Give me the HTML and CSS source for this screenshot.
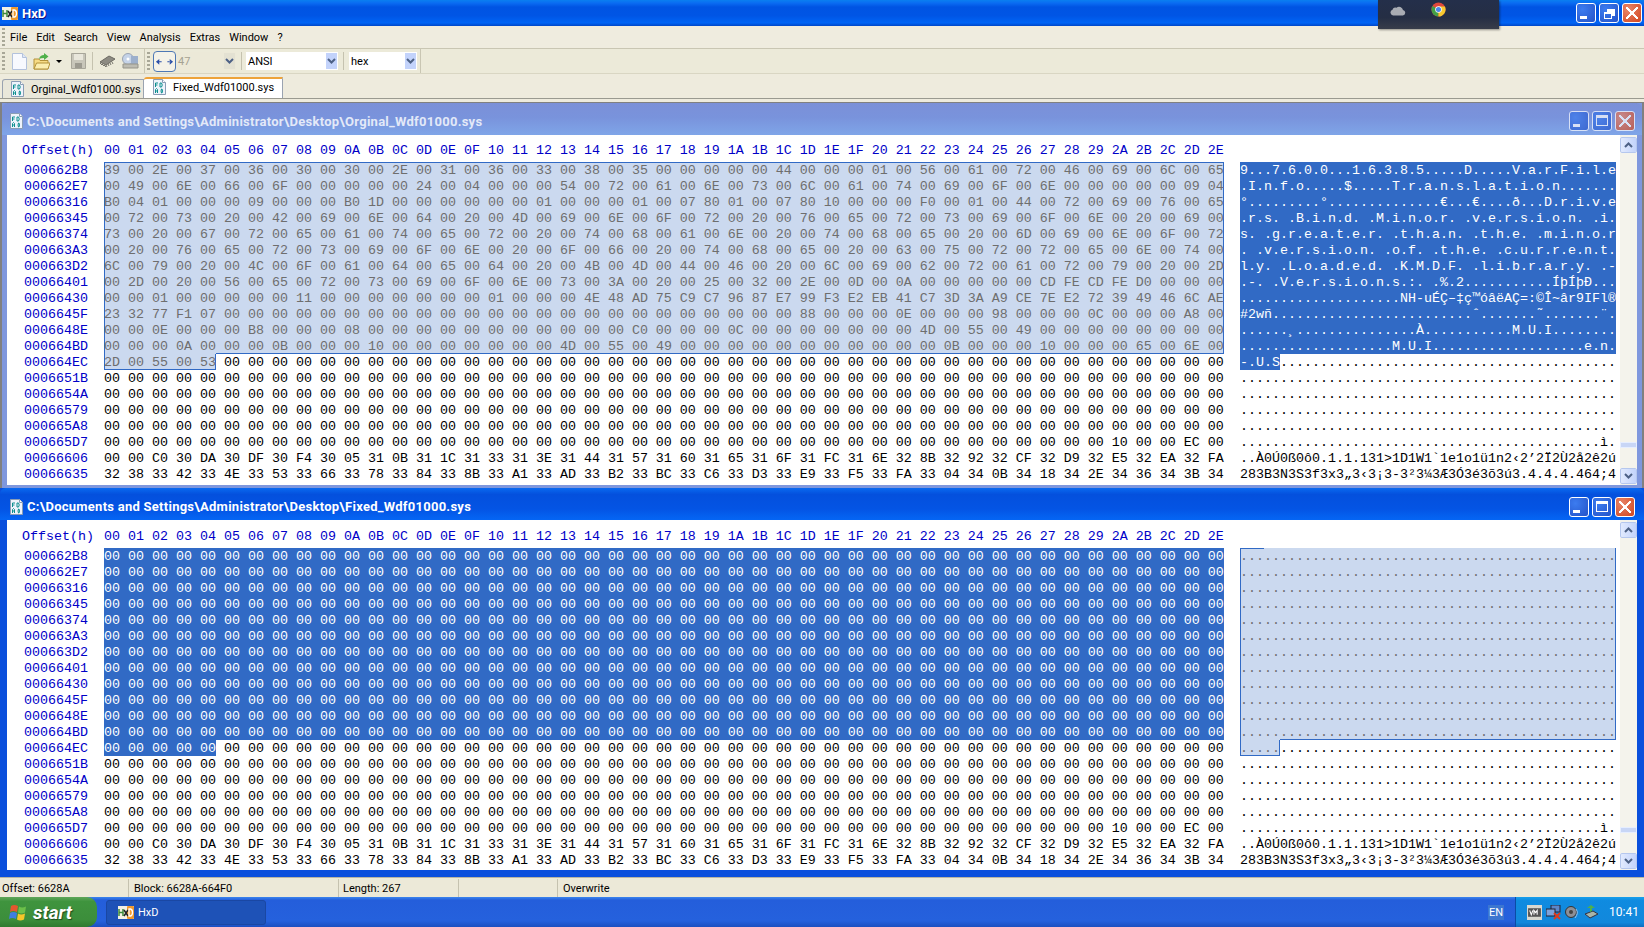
FILE: index.html
```html
<!DOCTYPE html>
<html>
<head>
    <meta charset="utf-8">
    <title>HxD</title>
    <link rel="stylesheet" href="styles.css">
</head>
<body>
    <svg class="defs" width="0" height="0">
        <symbol id="hxd" viewBox="0 0 16 13">
            <rect width="16" height="13" fill="#f4f1e4"/>
            <rect x="9" y="0" width="7" height="13" rx="1" fill="#f09a2e"/>
            <path d="M1 3v7M5 3v7M1 6.5h4" stroke="#3c8a3a" stroke-width="1.5" fill="none"/>
            <path d="M6 4l4 6M10 4l-4 6" stroke="#222" stroke-width="1.5" fill="none"/>
            <path d="M11 3v7h1.5q2-.5 2-3.500t-2-3.500z" stroke="#fff" stroke-width="1.300" fill="none"/>
        </symbol>
        <symbol id="doc" viewBox="0 0 13 16">
            <path d="M.5.5h9l3 3v12H.5z" fill="#eef3fb" stroke="#8a9db5"/>
            <path d="M9.500.5v3h3" fill="#fff" stroke="#8a9db5"/>
            <path d="M2.500 4h2.500M2.500 4v4M2.500 6h2M7 4v4M7 4h1.500q1.500 2 0 4H7M2.500 14v-3.500l1-1 1 1V14M2.500 12h2M8.500 10h.5q1 2 0 4h-.5q-1-2 0-4z" fill="none" stroke="#0c8f8f"/>
        </symbol>
        <symbol id="up" viewBox="0 0 9 6">
            <path d="M1 5l3.500-3.500L8 5" fill="none" stroke="#4d6185" stroke-width="2"/>
        </symbol>
        <symbol id="down" viewBox="0 0 9 6">
            <path d="M1 1l3.500 3.500L8 1" fill="none" stroke="#4d6185" stroke-width="2"/>
        </symbol>
    </svg>

    <div class="titlebar">
        <svg class="app-icon"><use href="#hxd"/></svg>
        <span class="app-name">HxD</span>
        <div class="caps caps-main">
            <span class="cap"><i class="g-min"></i></span>
            <span class="cap"><i class="g-restore"></i></span>
            <span class="cap cap-close"><i class="g-x"></i></span>
        </div>
    </div>

    <div class="thumb">
        <svg class="thumb-cloud" viewBox="0 0 16 12"><path d="M3 11.500a3 3 0 0 1-.500-5.800 3 3 0 0 1 4-2 4 4 0 0 1 6.500 2.300 2.800 2.800 0 0 1 0 5.500z" fill="#a9acb3"/></svg>
        <svg class="thumb-chrome" viewBox="0 0 16 16">
            <circle cx="8" cy="8" r="7.500" fill="#e0483c"/>
            <path d="M8 8L1.500 4.300A7.500 7.500 0 0 0 8 15.500z" fill="#43a047"/>
            <path d="M8 8v7.500A7.500 7.500 0 0 0 14.800 4.800H8z" fill="#f6c92f"/>
            <circle cx="8" cy="8" r="3.500" fill="#fff"/>
            <circle cx="8" cy="8" r="2.700" fill="#4a86e8"/>
        </svg>
    </div>

    <div class="menubar">
        <span class="grip"></span>
        <span class="menu-item">File</span>
        <span class="menu-item">Edit</span>
        <span class="menu-item">Search</span>
        <span class="menu-item">View</span>
        <span class="menu-item">Analysis</span>
        <span class="menu-item">Extras</span>
        <span class="menu-item">Window</span>
        <span class="menu-item">?</span>
    </div>

    <div class="toolbar">
        <div class="toolgroup">
            <span class="grip"></span>
            <svg class="tool tool-new" viewBox="0 0 15 17"><path d="M.5.5h10l4 4v12H.5z" fill="#f7f9fe" stroke="#b3c2dc"/><path d="M10.500.5v4h4" fill="#dfe7f5" stroke="#b3c2dc"/></svg>
            <svg class="tool tool-open" viewBox="0 0 17 17"><path d="M1 6h5l1 1.500h8V16H1z" fill="#f7dc86" stroke="#b3923a"/><path d="M1 16l2.500-6H17l-2 6z" fill="#fbeeb0" stroke="#b3923a"/><path d="M6 6q1-4 5-4V0l4.500 3.500L11 7V5q-3 0-5 1z" fill="#4fb04a"/></svg>
            <span class="tool-arrow"></span>
            <svg class="tool tool-save" viewBox="0 0 15 16"><path d="M.5.500h14v15H.5z" fill="#c8c6ba" stroke="#a8a69a"/><path d="M3 1h9v6H3z" fill="#e9e7dc"/><path d="M4 10h7v5H4z" fill="#9c9a90"/></svg>
            <span class="tool-sep"></span>
            <svg class="tool tool-chip" viewBox="0 0 17 13"><path d="M1 7l9-6 6 3-9 6z" fill="#8d8b82" stroke="#6c6a62"/><path d="M1 8l2 2M3 9l2 2M5 10l2 2M7 10l1 2M9 9l1 2M11 8l1 2M13 7l1 2" stroke="#77756c"/></svg>
            <svg class="tool tool-disk" viewBox="0 0 17 16"><ellipse cx="6" cy="6" rx="5.500" ry="5.500" fill="#c5d3e8" stroke="#9aa3b2"/><circle cx="6" cy="6" r="1.500" fill="#fff"/><path d="M9 3h7v8H9z" fill="#9db0cc"/><path d="M1 11h15v4H1z" fill="#bdbcb2" stroke="#95948a"/></svg>
        </div>
        <div class="toolgroup toolgroup-2">
            <span class="grip"></span>
            <span class="toggle"><svg viewBox="0 0 20 8"><path d="M1 4l3.500-3v6zM19 4l-3.500-3v6zM4 3.500h3v1H4zM13 3.500h3v1h-3z" fill="#2a4fa8"/></svg></span>
            <span class="combo combo-off"><span>47</span><i class="combo-btn"><svg><use href="#down"/></svg></i></span>
            <span class="tool-sep sep-wide"></span>
            <span class="combo combo-ansi"><span>ANSI</span><i class="combo-btn"><svg><use href="#down"/></svg></i></span>
            <span class="tool-sep sep-wide"></span>
            <span class="combo combo-hex"><span>hex</span><i class="combo-btn"><svg><use href="#down"/></svg></i></span>
        </div>
    </div>

    <div class="tabs">
        <span class="tab"><svg class="doc-icon"><use href="#doc"/></svg>Orginal_Wdf01000.sys</span>
        <span class="tab tab-active"><svg class="doc-icon"><use href="#doc"/></svg>Fixed_Wdf01000.sys</span>
    </div>

    <div class="mdi">
        <div class="win win-off">
            <div class="win-title">
                <svg class="doc-icon"><use href="#doc"/></svg>
                <span class="win-name">C:\Documents and Settings\Administrator\Desktop\Orginal_Wdf01000.sys</span>
                <div class="caps">
                    <span class="cap"><i class="g-min"></i></span>
                    <span class="cap"><i class="g-max"></i></span>
                    <span class="cap cap-close"><i class="g-x"></i></span>
                </div>
            </div>
            <div class="win-body">
                <div class="hexview">
                    <div class="row head"><span class="off">Offset(h)</span><span class="hex">00 01 02 03 04 05 06 07 08 09 0A 0B 0C 0D 0E 0F 10 11 12 13 14 15 16 17 18 19 1A 1B 1C 1D 1E 1F 20 21 22 23 24 25 26 27 28 29 2A 2B 2C 2D 2E</span></div>
                    <div class="rows">
                        <div class="row"><span class="off">000662B8</span><span class="hex"><span class="in ol-top">39 00 2E 00 37 00 36 00 30 00 30 00 2E 00 31 00 36 00 33 00 38 00 35 00 00 00 00 00 44 00 00 00 01 00 56 00 61 00 72 00 46 00 69 00 6C 00 65</span></span><span class="asc"><span class="act">9...7.6.0.0...1.6.3.8.5.....D.....V.a.r.F.i.l.e</span></span></div>
                        <div class="row"><span class="off">000662E7</span><span class="hex"><span class="in ol-mid">00 49 00 6E 00 66 00 6F 00 00 00 00 00 24 00 04 00 00 00 54 00 72 00 61 00 6E 00 73 00 6C 00 61 00 74 00 69 00 6F 00 6E 00 00 00 00 00 09 04</span></span><span class="asc"><span class="act">.I.n.f.o.....$.....T.r.a.n.s.l.a.t.i.o.n.......</span></span></div>
                        <div class="row"><span class="off">00066316</span><span class="hex"><span class="in ol-mid">B0 04 01 00 00 00 09 00 00 00 B0 1D 00 00 00 00 00 00 01 00 00 00 01 00 07 80 01 00 07 80 10 00 00 00 F0 00 01 00 44 00 72 00 69 00 76 00 65</span></span><span class="asc"><span class="act">°.........°..............€...€....ð...D.r.i.v.e</span></span></div>
                        <div class="row"><span class="off">00066345</span><span class="hex"><span class="in ol-mid">00 72 00 73 00 20 00 42 00 69 00 6E 00 64 00 20 00 4D 00 69 00 6E 00 6F 00 72 00 20 00 76 00 65 00 72 00 73 00 69 00 6F 00 6E 00 20 00 69 00</span></span><span class="asc"><span class="act">.r.s. .B.i.n.d. .M.i.n.o.r. .v.e.r.s.i.o.n. .i.</span></span></div>
                        <div class="row"><span class="off">00066374</span><span class="hex"><span class="in ol-mid">73 00 20 00 67 00 72 00 65 00 61 00 74 00 65 00 72 00 20 00 74 00 68 00 61 00 6E 00 20 00 74 00 68 00 65 00 20 00 6D 00 69 00 6E 00 6F 00 72</span></span><span class="asc"><span class="act">s. .g.r.e.a.t.e.r. .t.h.a.n. .t.h.e. .m.i.n.o.r</span></span></div>
                        <div class="row"><span class="off">000663A3</span><span class="hex"><span class="in ol-mid">00 20 00 76 00 65 00 72 00 73 00 69 00 6F 00 6E 00 20 00 6F 00 66 00 20 00 74 00 68 00 65 00 20 00 63 00 75 00 72 00 72 00 65 00 6E 00 74 00</span></span><span class="asc"><span class="act">. .v.e.r.s.i.o.n. .o.f. .t.h.e. .c.u.r.r.e.n.t.</span></span></div>
                        <div class="row"><span class="off">000663D2</span><span class="hex"><span class="in ol-mid">6C 00 79 00 20 00 4C 00 6F 00 61 00 64 00 65 00 64 00 20 00 4B 00 4D 00 44 00 46 00 20 00 6C 00 69 00 62 00 72 00 61 00 72 00 79 00 20 00 2D</span></span><span class="asc"><span class="act">l.y. .L.o.a.d.e.d. .K.M.D.F. .l.i.b.r.a.r.y. .-</span></span></div>
                        <div class="row"><span class="off">00066401</span><span class="hex"><span class="in ol-mid">00 2D 00 20 00 56 00 65 00 72 00 73 00 69 00 6F 00 6E 00 73 00 3A 00 20 00 25 00 32 00 2E 00 0D 00 0A 00 00 00 00 00 CD FE CD FE D0 00 00 00</span></span><span class="asc"><span class="act">.-. .V.e.r.s.i.o.n.s.:. .%.2...........ÍþÍþÐ...</span></span></div>
                        <div class="row"><span class="off">00066430</span><span class="hex"><span class="in ol-mid">00 00 01 00 00 00 00 00 11 00 00 00 00 00 00 00 01 00 00 00 4E 48 AD 75 C9 C7 96 87 E7 99 F3 E2 EB 41 C7 3D 3A A9 CE 7E E2 72 39 49 46 6C AE</span></span><span class="asc"><span class="act">....................NH-uÉÇ–‡ç™óâëAÇ=:©Î~âr9IFl®</span></span></div>
                        <div class="row"><span class="off">0006645F</span><span class="hex"><span class="in ol-mid">23 32 77 F1 07 00 00 00 00 00 00 00 00 00 00 00 00 00 00 00 00 00 00 00 00 00 00 00 00 88 00 00 00 0E 00 00 00 98 00 00 00 0C 00 00 00 A8 00</span></span><span class="asc"><span class="act">#2wñ.........................ˆ.......˜.......¨.</span></span></div>
                        <div class="row"><span class="off">0006648E</span><span class="hex"><span class="in ol-mid">00 00 0E 00 00 00 B8 00 00 00 08 00 00 00 00 00 00 00 00 00 00 00 C0 00 00 00 0C 00 00 00 00 00 00 00 4D 00 55 00 49 00 00 00 00 00 00 00 00</span></span><span class="asc"><span class="act">......¸...............À...........M.U.I........</span></span></div>
                        <div class="row"><span class="off">000664BD</span><span class="hex"><span class="in ol-left">00 00 00 0A 00</span><span class="in ol-rb"> 00 00 0B 00 00 00 10 00 00 00 00 00 00 00 4D 00 55 00 49 00 00 00 00 00 00 00 00 00 00 00 0B 00 00 00 10 00 00 00 65 00 6E 00</span></span><span class="asc"><span class="act">...................M.U.I...................e.n.</span></span></div>
                        <div class="row"><span class="off">000664EC</span><span class="hex"><span class="in ol-end">2D 00 55 00 53</span> 00 00 00 00 00 00 00 00 00 00 00 00 00 00 00 00 00 00 00 00 00 00 00 00 00 00 00 00 00 00 00 00 00 00 00 00 00 00 00 00 00 00</span><span class="asc"><span class="act">-.U.S</span>..........................................</span></div>
                        <div class="row"><span class="off">0006651B</span><span class="hex">00 00 00 00 00 00 00 00 00 00 00 00 00 00 00 00 00 00 00 00 00 00 00 00 00 00 00 00 00 00 00 00 00 00 00 00 00 00 00 00 00 00 00 00 00 00 00</span><span class="asc">...............................................</span></div>
                        <div class="row"><span class="off">0006654A</span><span class="hex">00 00 00 00 00 00 00 00 00 00 00 00 00 00 00 00 00 00 00 00 00 00 00 00 00 00 00 00 00 00 00 00 00 00 00 00 00 00 00 00 00 00 00 00 00 00 00</span><span class="asc">...............................................</span></div>
                        <div class="row"><span class="off">00066579</span><span class="hex">00 00 00 00 00 00 00 00 00 00 00 00 00 00 00 00 00 00 00 00 00 00 00 00 00 00 00 00 00 00 00 00 00 00 00 00 00 00 00 00 00 00 00 00 00 00 00</span><span class="asc">...............................................</span></div>
                        <div class="row"><span class="off">000665A8</span><span class="hex">00 00 00 00 00 00 00 00 00 00 00 00 00 00 00 00 00 00 00 00 00 00 00 00 00 00 00 00 00 00 00 00 00 00 00 00 00 00 00 00 00 00 00 00 00 00 00</span><span class="asc">...............................................</span></div>
                        <div class="row"><span class="off">000665D7</span><span class="hex">00 00 00 00 00 00 00 00 00 00 00 00 00 00 00 00 00 00 00 00 00 00 00 00 00 00 00 00 00 00 00 00 00 00 00 00 00 00 00 00 00 00 10 00 00 EC 00</span><span class="asc">.............................................ì.</span></div>
                        <div class="row"><span class="off">00066606</span><span class="hex">00 00 C0 30 DA 30 DF 30 F4 30 05 31 0B 31 1C 31 33 31 3E 31 44 31 57 31 60 31 65 31 6F 31 FC 31 6E 32 8B 32 92 32 CF 32 D9 32 E5 32 EA 32 FA</span><span class="asc">..À0Ú0ß0ô0.1.1.131&gt;1D1W1`1e1o1ü1n2‹2’2Ï2Ù2å2ê2ú</span></div>
                        <div class="row"><span class="off">00066635</span><span class="hex">32 38 33 42 33 4E 33 53 33 66 33 78 33 84 33 8B 33 A1 33 AD 33 B2 33 BC 33 C6 33 D3 33 E9 33 F5 33 FA 33 04 34 0B 34 18 34 2E 34 36 34 3B 34</span><span class="asc">283B3N3S3f3x3„3‹3¡3-3²3¼3Æ3Ó3é3õ3ú3.4.4.4.464;4</span></div>
                    </div>
                </div>
                <div class="scroll">
                    <span class="sb-btn"><svg><use href="#up"/></svg></span>
                    <span class="sb-track"><span class="sb-thumb"></span></span>
                    <span class="sb-btn"><svg><use href="#down"/></svg></span>
                </div>
            </div>
        </div>

        <div class="win win-on">
            <div class="win-title">
                <svg class="doc-icon"><use href="#doc"/></svg>
                <span class="win-name">C:\Documents and Settings\Administrator\Desktop\Fixed_Wdf01000.sys</span>
                <div class="caps">
                    <span class="cap"><i class="g-min"></i></span>
                    <span class="cap"><i class="g-max"></i></span>
                    <span class="cap cap-close"><i class="g-x"></i></span>
                </div>
            </div>
            <div class="win-body">
                <div class="hexview">
                    <div class="row head"><span class="off">Offset(h)</span><span class="hex">00 01 02 03 04 05 06 07 08 09 0A 0B 0C 0D 0E 0F 10 11 12 13 14 15 16 17 18 19 1A 1B 1C 1D 1E 1F 20 21 22 23 24 25 26 27 28 29 2A 2B 2C 2D 2E</span></div>
                    <div class="rows">
                        <div class="row"><span class="off">000662B8</span><span class="hex"><span class="act">00 00 00 00 00 00 00 00 00 00 00 00 00 00 00 00 00 00 00 00 00 00 00 00 00 00 00 00 00 00 00 00 00 00 00 00 00 00 00 00 00 00 00 00 00 00 00</span></span><span class="asc"><span class="in ol-tl">...</span><span class="in ol-right">............................................</span></span></div>
                        <div class="row"><span class="off">000662E7</span><span class="hex"><span class="act">00 00 00 00 00 00 00 00 00 00 00 00 00 00 00 00 00 00 00 00 00 00 00 00 00 00 00 00 00 00 00 00 00 00 00 00 00 00 00 00 00 00 00 00 00 00 00</span></span><span class="asc"><span class="in ol-mid">...............................................</span></span></div>
                        <div class="row"><span class="off">00066316</span><span class="hex"><span class="act">00 00 00 00 00 00 00 00 00 00 00 00 00 00 00 00 00 00 00 00 00 00 00 00 00 00 00 00 00 00 00 00 00 00 00 00 00 00 00 00 00 00 00 00 00 00 00</span></span><span class="asc"><span class="in ol-mid">...............................................</span></span></div>
                        <div class="row"><span class="off">00066345</span><span class="hex"><span class="act">00 00 00 00 00 00 00 00 00 00 00 00 00 00 00 00 00 00 00 00 00 00 00 00 00 00 00 00 00 00 00 00 00 00 00 00 00 00 00 00 00 00 00 00 00 00 00</span></span><span class="asc"><span class="in ol-mid">...............................................</span></span></div>
                        <div class="row"><span class="off">00066374</span><span class="hex"><span class="act">00 00 00 00 00 00 00 00 00 00 00 00 00 00 00 00 00 00 00 00 00 00 00 00 00 00 00 00 00 00 00 00 00 00 00 00 00 00 00 00 00 00 00 00 00 00 00</span></span><span class="asc"><span class="in ol-mid">...............................................</span></span></div>
                        <div class="row"><span class="off">000663A3</span><span class="hex"><span class="act">00 00 00 00 00 00 00 00 00 00 00 00 00 00 00 00 00 00 00 00 00 00 00 00 00 00 00 00 00 00 00 00 00 00 00 00 00 00 00 00 00 00 00 00 00 00 00</span></span><span class="asc"><span class="in ol-mid">...............................................</span></span></div>
                        <div class="row"><span class="off">000663D2</span><span class="hex"><span class="act">00 00 00 00 00 00 00 00 00 00 00 00 00 00 00 00 00 00 00 00 00 00 00 00 00 00 00 00 00 00 00 00 00 00 00 00 00 00 00 00 00 00 00 00 00 00 00</span></span><span class="asc"><span class="in ol-mid">...............................................</span></span></div>
                        <div class="row"><span class="off">00066401</span><span class="hex"><span class="act">00 00 00 00 00 00 00 00 00 00 00 00 00 00 00 00 00 00 00 00 00 00 00 00 00 00 00 00 00 00 00 00 00 00 00 00 00 00 00 00 00 00 00 00 00 00 00</span></span><span class="asc"><span class="in ol-mid">...............................................</span></span></div>
                        <div class="row"><span class="off">00066430</span><span class="hex"><span class="act">00 00 00 00 00 00 00 00 00 00 00 00 00 00 00 00 00 00 00 00 00 00 00 00 00 00 00 00 00 00 00 00 00 00 00 00 00 00 00 00 00 00 00 00 00 00 00</span></span><span class="asc"><span class="in ol-mid">...............................................</span></span></div>
                        <div class="row"><span class="off">0006645F</span><span class="hex"><span class="act">00 00 00 00 00 00 00 00 00 00 00 00 00 00 00 00 00 00 00 00 00 00 00 00 00 00 00 00 00 00 00 00 00 00 00 00 00 00 00 00 00 00 00 00 00 00 00</span></span><span class="asc"><span class="in ol-mid">...............................................</span></span></div>
                        <div class="row"><span class="off">0006648E</span><span class="hex"><span class="act">00 00 00 00 00 00 00 00 00 00 00 00 00 00 00 00 00 00 00 00 00 00 00 00 00 00 00 00 00 00 00 00 00 00 00 00 00 00 00 00 00 00 00 00 00 00 00</span></span><span class="asc"><span class="in ol-mid">...............................................</span></span></div>
                        <div class="row"><span class="off">000664BD</span><span class="hex"><span class="act">00 00 00 00 00 00 00 00 00 00 00 00 00 00 00 00 00 00 00 00 00 00 00 00 00 00 00 00 00 00 00 00 00 00 00 00 00 00 00 00 00 00 00 00 00 00 00</span></span><span class="asc"><span class="in ol-left">.....</span><span class="in ol-rb">..........................................</span></span></div>
                        <div class="row"><span class="off">000664EC</span><span class="hex"><span class="act">00 00 00 00 00</span> 00 00 00 00 00 00 00 00 00 00 00 00 00 00 00 00 00 00 00 00 00 00 00 00 00 00 00 00 00 00 00 00 00 00 00 00 00 00 00 00 00 00</span><span class="asc"><span class="in ol-end">.....</span>..........................................</span></div>
                        <div class="row"><span class="off">0006651B</span><span class="hex">00 00 00 00 00 00 00 00 00 00 00 00 00 00 00 00 00 00 00 00 00 00 00 00 00 00 00 00 00 00 00 00 00 00 00 00 00 00 00 00 00 00 00 00 00 00 00</span><span class="asc">...............................................</span></div>
                        <div class="row"><span class="off">0006654A</span><span class="hex">00 00 00 00 00 00 00 00 00 00 00 00 00 00 00 00 00 00 00 00 00 00 00 00 00 00 00 00 00 00 00 00 00 00 00 00 00 00 00 00 00 00 00 00 00 00 00</span><span class="asc">...............................................</span></div>
                        <div class="row"><span class="off">00066579</span><span class="hex">00 00 00 00 00 00 00 00 00 00 00 00 00 00 00 00 00 00 00 00 00 00 00 00 00 00 00 00 00 00 00 00 00 00 00 00 00 00 00 00 00 00 00 00 00 00 00</span><span class="asc">...............................................</span></div>
                        <div class="row"><span class="off">000665A8</span><span class="hex">00 00 00 00 00 00 00 00 00 00 00 00 00 00 00 00 00 00 00 00 00 00 00 00 00 00 00 00 00 00 00 00 00 00 00 00 00 00 00 00 00 00 00 00 00 00 00</span><span class="asc">...............................................</span></div>
                        <div class="row"><span class="off">000665D7</span><span class="hex">00 00 00 00 00 00 00 00 00 00 00 00 00 00 00 00 00 00 00 00 00 00 00 00 00 00 00 00 00 00 00 00 00 00 00 00 00 00 00 00 00 00 10 00 00 EC 00</span><span class="asc">.............................................ì.</span></div>
                        <div class="row"><span class="off">00066606</span><span class="hex">00 00 C0 30 DA 30 DF 30 F4 30 05 31 0B 31 1C 31 33 31 3E 31 44 31 57 31 60 31 65 31 6F 31 FC 31 6E 32 8B 32 92 32 CF 32 D9 32 E5 32 EA 32 FA</span><span class="asc">..À0Ú0ß0ô0.1.1.131&gt;1D1W1`1e1o1ü1n2‹2’2Ï2Ù2å2ê2ú</span></div>
                        <div class="row"><span class="off">00066635</span><span class="hex">32 38 33 42 33 4E 33 53 33 66 33 78 33 84 33 8B 33 A1 33 AD 33 B2 33 BC 33 C6 33 D3 33 E9 33 F5 33 FA 33 04 34 0B 34 18 34 2E 34 36 34 3B 34</span><span class="asc">283B3N3S3f3x3„3‹3¡3-3²3¼3Æ3Ó3é3õ3ú3.4.4.4.464;4</span></div>
                    </div>
                </div>
                <div class="scroll">
                    <span class="sb-btn"><svg><use href="#up"/></svg></span>
                    <span class="sb-track"><span class="sb-thumb"></span></span>
                    <span class="sb-btn"><svg><use href="#down"/></svg></span>
                </div>
            </div>
        </div>
    </div>

    <div class="statusbar">
        <span class="cell cell-offset">Offset: 6628A</span>
        <span class="cell cell-block">Block: 6628A-664F0</span>
        <span class="cell cell-length">Length: 267</span>
        <span class="cell cell-empty"></span>
        <span class="cell">Overwrite</span>
    </div>

    <div class="taskbar">
        <span class="start">
            <svg class="flag" viewBox="0 0 20 19">
                <path d="M2 3q3-2 7 0l-1 6q-4-2-7 0z" fill="#e4572e"/>
                <path d="M10 3.500q3 2 7 0l-1 6q-4 2-7 0z" fill="#6cc04a"/>
                <path d="M1 10q3-2 7 0l-1 6q-4-2-7 0z" fill="#3f7ee0"/>
                <path d="M9 10.500q3 2 7 0l-1 6q-4 2-7 0z" fill="#f5c629"/>
            </svg>
            <span class="start-label">start</span>
        </span>
        <span class="task"><svg class="app-icon"><use href="#hxd"/></svg>HxD</span>
        <span class="lang">EN</span>
        <div class="tray">
            <svg class="tray-icon" viewBox="0 0 14 14"><rect width="14" height="14" fill="#d8d8d0"/><rect x="1" y="3" width="12" height="8" fill="#555"/><path d="M2.500 5l1.500 4 1.500-4M6.500 9V5l1.500 2 1.500-2v4" stroke="#fff" fill="none"/></svg>
            <svg class="tray-icon" viewBox="0 0 15 15"><rect x="5" y="0" width="9" height="7" fill="#5c86c9" stroke="#223"/><rect x="0" y="4" width="9" height="7" fill="#7da2db" stroke="#223"/><path d="M8 8l6 6M14 8l-6 6" stroke="#e03a1c" stroke-width="2"/></svg>
            <svg class="tray-icon" viewBox="0 0 15 15"><circle cx="6" cy="7" r="5.500" fill="#8d8f96" stroke="#333"/><circle cx="6" cy="7" r="2" fill="#444"/><path d="M11 4q3 4-1 9" stroke="#9cc4ee" fill="none"/></svg>
            <svg class="tray-icon" viewBox="0 0 15 15"><path d="M1 9l8-3 5 3-8 4z" fill="#a8b4a8" stroke="#334"/><path d="M6 7V3H3l4-3 4 3H8v3z" fill="#4fb04a"/></svg>
            <span class="clock">10:41</span>
        </div>
    </div>
</body>
</html>
```

FILE: styles.css
```css
* {
    box-sizing: border-box;
}

body {
    margin: 0;
    width: 1644px;
    height: 927px;
    overflow: hidden;
    display: flex;
    flex-direction: column;
    background: #ece9d8;
    font-family: Roboto, "Liberation Sans", sans-serif;
    font-size: 11px;
    color: #000;
    position: relative;
}

svg {
    display: block;
}

.defs {
    position: absolute;
}

/* main title bar */
.titlebar {
    height: 26px;
    flex: none;
    display: flex;
    align-items: center;
    padding-left: 2px;
    background: linear-gradient(#0a7ff0 0, #0a6cf2 3px, #0054e3 7px, #0055e5 60%, #0064f5 88%, #0046c8 100%);
    color: #fff;
}

.app-icon {
    width: 16px;
    height: 13px;
    flex: none;
}

.app-name {
    margin-left: 4px;
    font-size: 13px;
    font-weight: 700;
    text-shadow: 1px 1px 0 #0f1089;
}

.caps {
    margin-left: auto;
    display: flex;
    gap: 3px;
}

.caps-main {
    padding-right: 2px;
}

.cap {
    width: 20px;
    height: 20px;
    border: 1px solid #fff;
    border-radius: 3px;
    background: radial-gradient(circle at 30% 30%, #3c7cf0, #2453c8);
    display: flex;
    align-items: center;
    justify-content: center;
    position: relative;
}

.cap-close {
    background: radial-gradient(circle at 30% 30%, #e8866a, #d2451e);
}

.g-min {
    width: 7px;
    height: 3px;
    background: #fff;
    align-self: flex-end;
    margin: 0 5px 3px 0;
}

.g-max {
    width: 12px;
    height: 11px;
    border: 1px solid #fff;
    border-top-width: 3px;
}

.g-restore {
    width: 8px;
    height: 7px;
    border: 1px solid #fff;
    border-top-width: 2px;
    margin: 4px 3px 0 0;
    box-shadow: 3px -3px 0 -1px transparent, 3px -3px 0 0 #fff;
}

.g-x {
    width: 12px;
    height: 12px;
    background:
        linear-gradient(45deg, transparent 42%, #fff 42%, #fff 58%, transparent 58%),
        linear-gradient(-45deg, transparent 42%, #fff 42%, #fff 58%, transparent 58%);
}

/* the dark preview strip over the title bar */
.thumb {
    position: absolute;
    left: 1378px;
    top: 0;
    width: 121px;
    height: 29px;
    background: linear-gradient(#242f4a, #252e44 60%, #383d4a);
    box-shadow: 1px 1px 2px rgba(0, 0, 0, 0.4);
}

.thumb-cloud {
    position: absolute;
    left: 12px;
    top: 4px;
    width: 16px;
    height: 12px;
}

.thumb-chrome {
    position: absolute;
    left: 53px;
    top: 2px;
    width: 15px;
    height: 15px;
}

/* menu and toolbars */
.menubar {
    height: 22px;
    flex: none;
    display: flex;
    align-items: center;
    padding: 0 0 0 2px;
    background: #efecdf;
}

.grip {
    width: 3px;
    height: 18px;
    flex: none;
    background: repeating-linear-gradient(#a8a797 0, #a8a797 2px, transparent 2px, transparent 4px);
}

.menu-item {
    margin-left: 9px;
    margin-top: 2px;
    font-size: 11px;
    line-height: 16px;
}

.grip + .menu-item {
    margin-left: 5px;
}

.toolbar {
    height: 26px;
    flex: none;
    display: flex;
    align-items: center;
    padding-left: 2px;
    background: #ecead9;
    border-top: 1px solid #c9c6b3;
    border-bottom: 1px solid #d9d6c3;
}

.toolgroup {
    display: flex;
    align-items: center;
    height: 24px;
    width: 143px;
    border-right: 1px solid #c9c6b3;
}

.toolgroup-2 {
    width: 276px;
    padding-left: 2px;
    border-right: 1px solid #c9c6b3;
}

.tool {
    flex: none;
}

.tool-new {
    width: 15px;
    height: 17px;
    margin-left: 7px;
}

.tool-open {
    width: 17px;
    height: 17px;
    margin-left: 6px;
}

.tool-arrow {
    width: 0;
    height: 0;
    margin: 0 9px 0 6px;
    border: 3px solid transparent;
    border-top: 3px solid #000;
    border-bottom: 0;
}

.tool-save {
    width: 15px;
    height: 16px;
}

.tool-sep {
    width: 1px;
    height: 18px;
    flex: none;
    margin: 0 6px;
    background: #c5c2af;
}

.sep-wide {
    margin: 0 5px;
}

.tool-chip {
    width: 17px;
    height: 13px;
}

.tool-disk {
    width: 17px;
    height: 16px;
    margin-left: 6px;
}

.toggle {
    width: 23px;
    height: 21px;
    margin-left: 3px;
    flex: none;
    border: 1px solid #4e78b5;
    border-radius: 4px;
    background: #f4f2e8;
    padding: 6px 1px;
}

.combo {
    height: 18px;
    flex: none;
    display: flex;
    align-items: center;
    justify-content: space-between;
    padding: 0 1px 0 2px;
    background: #fff;
    font-size: 11px;
}

.combo-off {
    width: 60px;
    background: #ece9d8;
    color: #a5a293;
}

.combo-ansi {
    width: 92px;
    margin-left: -1px;
}

.combo-hex {
    width: 68px;
}

.combo-btn {
    width: 11px;
    height: 16px;
    background: #c3d3fb;
    display: flex;
    align-items: center;
    justify-content: center;
}

.combo-off .combo-btn {
    background: #e3e1d2;
}

.combo-btn svg {
    width: 9px;
    height: 6px;
}

/* tabs */
.tabs {
    height: 25px;
    flex: none;
    display: flex;
    align-items: flex-end;
    padding-left: 2px;
    background: #eeebdd;
    border-bottom: 1px solid #9a9a90;
}

.tab {
    height: 19px;
    width: 142px;
    display: flex;
    align-items: center;
    gap: 7px;
    padding-left: 8px;
    font-size: 11px;
    white-space: nowrap;
    background: #e9e7da;
    border: 1px solid #9aa3b0;
    border-bottom: 0;
    border-radius: 3px 0 0 0;
}

.tab-active {
    height: 21px;
    width: 139px;
    padding: 0 0 3px 9px;
    background: #fff;
    border-top: 2px solid #eda33b;
    border-left: 0;
}

.doc-icon {
    width: 13px;
    height: 16px;
    flex: none;
}

/* child windows */
.mdi {
    flex: none;
    height: 778px;
    padding-top: 4px;
    background: linear-gradient(#eeebdd 3px, #808080 3px);
}

.win {
    display: flex;
    flex-direction: column;
    border-style: solid;
    border-width: 0 7px;
}

.win-off {
    height: 385px;
    margin: 0 2px;
    border-width: 0 5px 3px;
    border-color: #7f97dd;
}

.win-on {
    height: 389px;
    border-color: #0a4fdc;
    border-bottom: 7px solid #0a4fdc;
}

.win-title {
    flex: none;
    height: 32px;
    display: flex;
    align-items: center;
    margin: 0 -7px;
    padding: 5px 8px 0 10px;
    color: #fff;
    border-radius: 6px 6px 0 0;
}

.win-off .win-title {
    margin: 0 -5px;
    padding: 3px 6px 0 8px;
    background: linear-gradient(#7b90d8 0, #7993dc 45%, #7fa5e8 100%);
}

.win-on .win-title {
    background: linear-gradient(#0a6af0 0, #0450dd 20%, #0454e4 65%, #0566f5 100%);
}

.win-name {
    margin-left: 4px;
    font-size: 13px;
    font-weight: 700;
    letter-spacing: 0.26px;
    white-space: nowrap;
}

.win-off .win-name {
    margin-top: 2px;
    color: #e3e9f8;
}

.win-off .cap {
    opacity: 0.7;
}

.win-title .caps {
    margin-right: 1px;
}

.win-body {
    flex: 1;
    display: flex;
    background: #fff;
    overflow: hidden;
}

.hexview {
    width: 1613px;
    flex: none;
    font-family: "Liberation Mono", monospace;
    font-size: 13.333px;
    line-height: 18px;
    padding-top: 7px;
}

.win-on .hexview {
    padding-top: 8px;
}

.row {
    display: flex;
    height: 16px;
    padding-left: 17px;
}

.head {
    color: #0000c8;
    margin-bottom: 4px;
}

.head .off {
    text-indent: -2px;
}

.off,
.hex,
.asc {
    flex: none;
    white-space: pre;
}

.off {
    width: 80px;
    color: #0000c8;
}

.hex {
    width: 1120px;
}

.asc {
    width: 376px;
    margin-left: 16px;
}

.act,
.in {
    display: inline-block;
    height: 16px;
    vertical-align: top;
}

.act {
    background: #316ac5;
    color: #fff;
}

.in {
    background: #cbd9ef;
    color: #6e6e6e;
}

.ol-top {
    box-shadow: inset 1px 1px 0 #316ac5, inset -1px 0 0 #316ac5;
}

.ol-mid {
    box-shadow: inset 1px 0 0 #316ac5, inset -1px 0 0 #316ac5;
}

.ol-left {
    box-shadow: inset 1px 0 0 #316ac5;
}

.ol-right {
    box-shadow: inset -1px 0 0 #316ac5;
}

.ol-tl {
    box-shadow: inset 1px 1px 0 #316ac5;
}

.ol-rb {
    box-shadow: inset -1px -1px 0 #316ac5;
}

.ol-end {
    box-shadow: inset 1px -1px 0 #316ac5, inset -1px 0 0 #316ac5;
}

/* scrollbars */
.scroll {
    width: 17px;
    flex: none;
    display: flex;
    flex-direction: column;
    padding: 2px 0 1px;
    background: #f4f3ec;
}

.sb-btn {
    height: 16px;
    flex: none;
    display: flex;
    align-items: center;
    justify-content: center;
    background: linear-gradient(90deg, #e1eafe, #c3d3fb);
    border: 1px solid #fff;
    border-radius: 2px;
    outline: 1px solid #b5c7ee;
    outline-offset: -1px;
}

.sb-btn svg {
    width: 9px;
    height: 6px;
}

.sb-track {
    flex: 1;
    display: flex;
    flex-direction: column;
    justify-content: flex-end;
    padding-bottom: 20px;
}

.sb-thumb {
    height: 6px;
    background: #c8d6f6;
    border: 1px solid #e6eeff;
}

/* status bar */
.statusbar {
    height: 20px;
    flex: none;
    display: flex;
    align-items: center;
    background: #ece9d8;
    border-top: 1px solid #b8b5a4;
    font-size: 11px;
}

.cell {
    height: 18px;
    padding-left: 2px;
    line-height: 20px;
}

.cell-offset {
    width: 129px;
    border-right: 1px solid #c5c2af;
}

.cell-block {
    width: 210px;
    padding-left: 5px;
    border-right: 1px solid #c5c2af;
}

.cell-length {
    width: 120px;
    padding-left: 4px;
    border-right: 1px solid #c5c2af;
}

.cell-empty {
    width: 99px;
    border-right: 1px solid #c5c2af;
}

.cell:last-child {
    padding-left: 5px;
}

/* task bar */
.taskbar {
    height: 30px;
    flex: none;
    display: flex;
    align-items: center;
    background: linear-gradient(#3b86ee 0, #245edb 10%, #2561dd 80%, #1c4fc0 100%);
    color: #fff;
}

.start {
    width: 97px;
    height: 30px;
    flex: none;
    display: flex;
    align-items: center;
    padding-left: 9px;
    border-radius: 0 10px 10px 0;
    background: linear-gradient(#5fa65a 0, #3f943e 15%, #3c8e3b 75%, #2f7a2f 100%);
}

.flag {
    width: 20px;
    height: 19px;
}

.start-label {
    margin-left: 4px;
    font-size: 19px;
    font-weight: 700;
    font-style: italic;
    text-shadow: 1px 1px 1px #1c4a1c;
}

.task {
    width: 160px;
    height: 25px;
    margin-left: 9px;
    flex: none;
    display: flex;
    align-items: center;
    gap: 4px;
    padding-left: 11px;
    font-size: 11px;
    border-radius: 3px;
    background: #1e52b7;
    border: 1px solid #1a47a3;
}

.lang {
    margin-left: auto;
    margin-right: 11px;
    padding: 1px;
    font-size: 11px;
    background: #3c76d0;
}

.tray {
    width: 129px;
    height: 30px;
    flex: none;
    display: flex;
    align-items: center;
    gap: 4px;
    padding-left: 11px;
    background: linear-gradient(#17a0ec 0, #0f8be0 12%, #1288dc 85%, #0e6fc0 100%);
    border-left: 1px solid #0b4ba5;
}

.tray-icon {
    width: 15px;
    height: 15px;
    flex: none;
}

.clock {
    margin-left: 6px;
    font-size: 12px;
}
```
